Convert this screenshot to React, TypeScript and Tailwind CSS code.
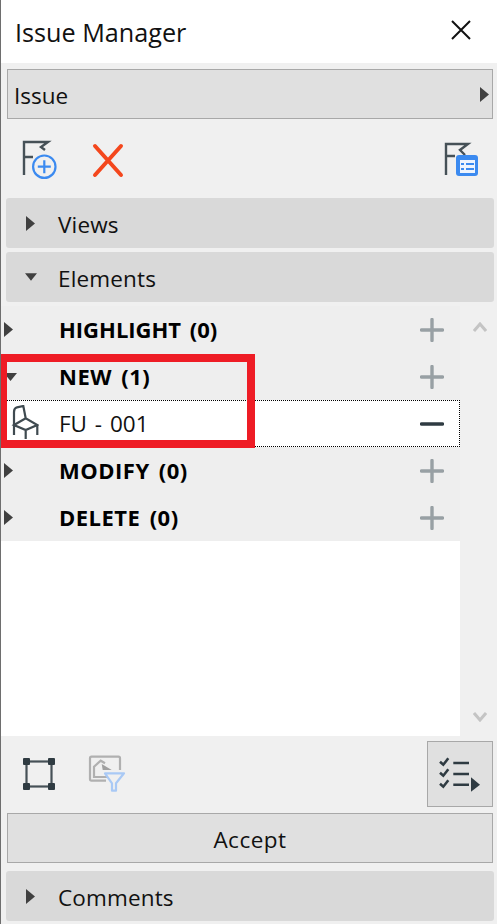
import React from 'react';

const font = { fontFamily: '"Open Sans", "Noto Sans", sans-serif' };

const Caret = ({ open = false }: { open?: boolean }) =>
  open ? (
    <svg width="13" height="8" viewBox="0 0 13 8">
      <path d="M0 0h13L6.5 8z" fill="#404040" />
    </svg>
  ) : (
    <svg width="9" height="15" viewBox="0 0 9 15">
      <path d="M0 0l9 7.5L0 15z" fill="#404040" />
    </svg>
  );

const PlusIcon = () => (
  <svg width="24" height="24" viewBox="0 0 24 24">
    <path d="M12 1.5v21M1.5 12h21" stroke="#98a0a4" strokeWidth="3.4" strokeLinecap="round" />
  </svg>
);

const MinusIcon = () => (
  <svg width="24" height="24" viewBox="0 0 24 24">
    <path d="M1.5 12h21" stroke="#2f3b42" strokeWidth="3.4" strokeLinecap="round" />
  </svg>
);

const FlagAdd = () => (
  <svg width="36" height="39" viewBox="0 0 36 39">
    <path d="M2 35V2h24l-7 5 4 3M2 17h9" fill="none" stroke="#465157" strokeWidth="2.4" />
    <circle cx="22.3" cy="26.7" r="11.2" fill="#f0f0f0" stroke="#3b8af0" strokeWidth="2.2" />
    <path d="M22.3 20.2v13M15.8 26.7h13" stroke="#3b8af0" strokeWidth="2.2" />
  </svg>
);

const FlagList = () => (
  <svg width="36" height="36" viewBox="0 0 36 36">
    <path d="M2 34V3h22l-8 6 5 5M2 15h9" fill="none" stroke="#465157" strokeWidth="2.4" />
    <rect x="12" y="14" width="22" height="21" rx="3" fill="#3b8af0" />
    <rect x="16" y="19" width="15" height="13" fill="#eef4fd" />
    <path d="M17 23h3M22 23h8M17 28h3M22 28h8" stroke="#3b8af0" strokeWidth="2" />
  </svg>
);

const Chair = () => (
  <svg width="28" height="35" viewBox="0 0 28 35">
    <path
      d="M3 30V7Q3 3 6 2.3L12.3 1L14.7 13.3M3 20L14.7 13.3L26.3 20L14.7 25ZM14.7 25V34M26.3 20V30"
      fill="none"
      stroke="#3f4a50"
      strokeWidth="2.2"
    />
  </svg>
);

const Selection = () => (
  <svg width="32" height="32" viewBox="0 0 32 32">
    <rect x="3.5" y="3.5" width="25" height="25" fill="none" stroke="#465157" strokeWidth="2.2" />
    <g fill="#2f3b42">
      <rect x="0" y="0" width="7" height="7" rx="1" />
      <rect x="25" y="0" width="7" height="7" rx="1" />
      <rect x="0" y="25" width="7" height="7" rx="1" />
      <rect x="25" y="25" width="7" height="7" rx="1" />
    </g>
  </svg>
);

const ViewFilter = () => (
  <svg width="40" height="40" viewBox="0 0 40 40">
    <path d="M18 25.7H3.5Q2 25.7 2 24V3.2Q2 1.7 3.5 1.7H30.5Q32 1.7 32 3.2V15" fill="none" stroke="#b0b0b0" strokeWidth="2.2" />
    <path d="M20 22H6V11.7L12.7 5.7L17 8.3" fill="none" stroke="#b0b0b0" strokeWidth="2.2" />
    <path d="M13.7 9L23.7 15H14.7z" fill="#a0a0a0" />
    <path d="M17 18.3H36L28 28.3V35.7H24V28.3z" fill="#f0f0f0" stroke="#a9c9f5" strokeWidth="2.2" strokeLinejoin="round" />
  </svg>
);

const CheckList = () => (
  <svg width="42" height="40" viewBox="0 0 42 40">
    <path
      d="M1 7.7L4.3 10.7L9.3 4.3M1 18.7L4.3 21.7L9.3 15.3M1 29.7L4.3 32.7L9.3 26.3"
      fill="none"
      stroke="#2f3b42"
      strokeWidth="2.6"
    />
    <path d="M14.3 9H30M14.3 20H30M14.3 30.7H30" stroke="#2f3b42" strokeWidth="2.4" />
    <path d="M32 23.3L41 30.7L32 37.7z" fill="#2f3b42" />
  </svg>
);

const Section = ({ label, open = false, className = '' }: { label: string; open?: boolean; className?: string }) => (
  <div className={`ml-[5px] mr-[3px] flex h-[50px] shrink-0 items-center rounded-[3px] bg-[#d9d9d9] pl-[20px] ${className}`}>
    <span className={open ? 'flex w-[12px] -ml-[1px] mr-[1px]' : 'flex w-[12px]'}>
      <Caret open={open} />
    </span>
    <span className="ml-[20px] pt-[3px] text-[22.5px] tracking-[0.15px] text-[#111]">{label}</span>
  </div>
);

const GroupRow = ({ label, open = false, labelClass = 'tracking-[0.5px]' }: { label: string; open?: boolean; labelClass?: string }) => (
  <div className="flex h-[47px] items-center bg-[#eeeeee] pr-[16px]">
    <span className="flex w-[58px] pl-[3px]">
      <Caret open={open} />
    </span>
    <span className={`flex-1 text-[22px] font-bold text-black [word-spacing:3px] ${labelClass}`}>{label}</span>
    <PlusIcon />
  </div>
);

export default function App() {
  return (
    <div className="relative flex h-[924px] w-[497px] flex-col overflow-hidden border-l border-[#6e6e6e] bg-[#f0f0f0]" style={font}>
      {/* Título */}
      <div className="flex h-[63px] shrink-0 items-center justify-between bg-white pl-[14px] pr-[26px]">
        <span className="pt-[3px] text-[25.2px] text-[#111]">Issue Manager</span>
        <svg width="20" height="20" viewBox="0 0 20 20" className="mb-[4px]">
          <path d="M1 1l18 18M19 1L1 19" stroke="#111" strokeWidth="2" />
        </svg>
      </div>

      {/* Selector */}
      <div className="ml-[6px] mr-[4px] mt-[6px] flex h-[50px] shrink-0 items-center justify-between border border-[#a8a8a8] bg-[#e0e0e0] pl-[6px] pr-[3px]">
        <span className="pt-[3px] text-[22.5px] text-[#111]">Issue</span>
        <Caret />
      </div>

      {/* Barra de acciones */}
      <div className="flex h-[79px] shrink-0 items-center pl-[21px] pr-[17px] pt-[2px]">
        <FlagAdd />
        <svg width="32" height="36" viewBox="0 0 32 36" className="ml-[34px]">
          <path d="M3 4l26 29M29 4L3 33" stroke="#f4471d" strokeWidth="4" strokeLinecap="round" />
        </svg>
        <span className="ml-auto -mt-[2px] flex">
          <FlagList />
        </span>
      </div>

      <Section label="Views" />
      <Section label="Elements" open className="mt-[4px]" />

      {/* Lista */}
      <div className="mt-[4px] flex h-[430px] shrink-0">
        <div className="w-[459px] bg-white">
          <GroupRow label="HIGHLIGHT (0)" labelClass="" />
          <GroupRow label="NEW (1)" open />
          <div className="flex h-[47px] items-center border border-dotted border-black bg-white pr-[15px]">
            <span className="mb-[2px] flex w-[57px] pl-[9px]">
              <Chair />
            </span>
            <span className="flex-1 pt-[1px] text-[22.5px] text-[#111] [word-spacing:2px]">FU - 001</span>
            <MinusIcon />
          </div>
          <GroupRow label="MODIFY (0)" />
          <GroupRow label="DELETE (0)" />
        </div>
        <div className="flex flex-1 flex-col items-center justify-between pb-[14px] pl-[3px] pt-[16px]">
          <svg width="14" height="10" viewBox="0 0 14 10">
            <path d="M1 9l6-7 6 7" fill="none" stroke="#c4c4c4" strokeWidth="3" />
          </svg>
          <svg width="14" height="10" viewBox="0 0 14 10">
            <path d="M1 1l6 7 6-7" fill="none" stroke="#c4c4c4" strokeWidth="3" />
          </svg>
        </div>
      </div>

      {/* Barra inferior */}
      <div className="flex h-[76px] shrink-0 items-center pl-[22px] pr-[4px]">
        <Selection />
        <span className="ml-[33px] mt-[2px] flex">
          <ViewFilter />
        </span>
        <div className="ml-auto flex h-[66px] w-[66px] items-center border border-[#a8a8a8] bg-[#e0e0e0] pl-[11px]">
          <CheckList />
        </div>
      </div>

      <div className="ml-[6px] mr-[4px] mt-[1px] flex h-[50px] shrink-0 items-center justify-center border border-[#a8a8a8] bg-[#e0e0e0] pt-[3px] text-[22.5px] tracking-[0.5px] text-[#111]">
        Accept
      </div>
      <Section label="Comments" className="mt-[8px]" />

      {/* Marca roja de anotación */}
      <div className="absolute left-[-1px] top-[354px] h-[94px] w-[255px] border-y-[8px] border-l-[7px] border-r-[8px] border-[#ee1c25]" />
    </div>
  );
}
